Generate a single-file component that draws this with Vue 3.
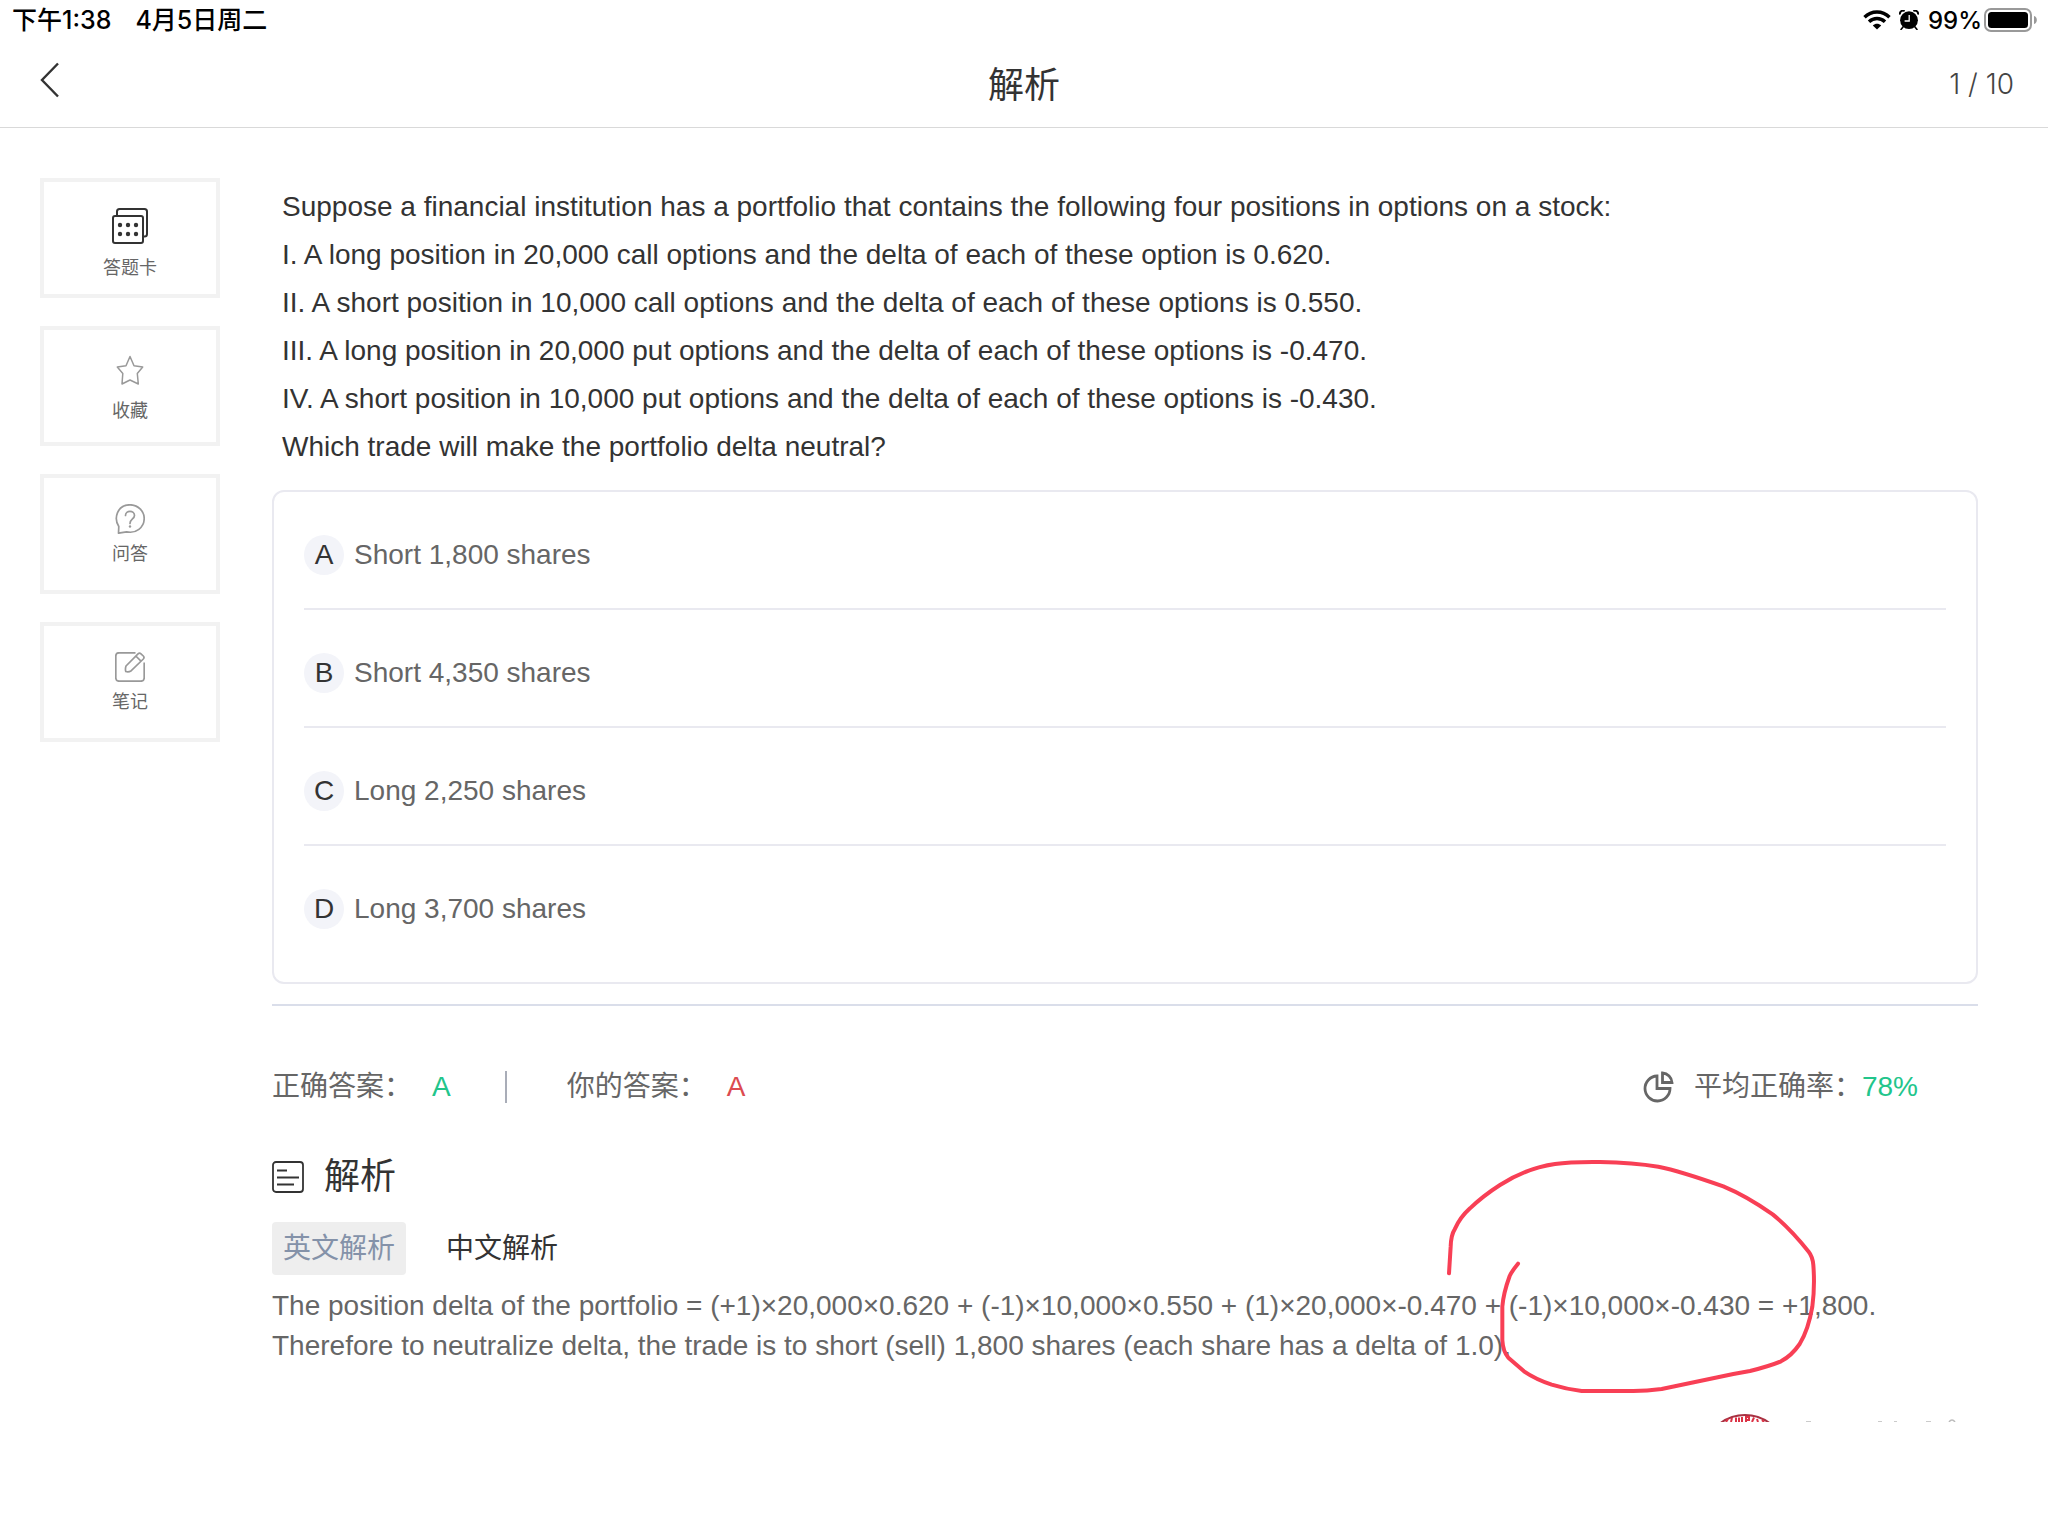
<script setup>
import { ref } from 'vue'

const QUESTION_LINES = [
  'Suppose a financial institution has a portfolio that contains the following four positions in options on a stock:',
  'I. A long position in 20,000 call options and the delta of each of these option is 0.620.',
  'II. A short position in 10,000 call options and the delta of each of these options is 0.550.',
  'III. A long position in 20,000 put options and the delta of each of these options is -0.470.',
  'IV. A short position in 10,000 put options and the delta of each of these options is -0.430.',
  'Which trade will make the portfolio delta neutral?',
]

const OPTIONS = [
  { key: 'A', text: 'Short 1,800 shares' },
  { key: 'B', text: 'Short 4,350 shares' },
  { key: 'C', text: 'Long 2,250 shares' },
  { key: 'D', text: 'Long 3,700 shares' },
]

const EXPLANATION = [
  'The position delta of the portfolio = (+1)×20,000×0.620 + (-1)×10,000×0.550 + (1)×20,000×-0.470 + (-1)×10,000×-0.430 = +1,800.',
  'Therefore to neutralize delta, the trade is to short (sell) 1,800 shares (each share has a delta of 1.0).',
]

const TABS = ['英文解析', '中文解析']
const activeTab = ref(0)
</script>

<template>
  <div class="page">
    <div class="status-bar">
      <div class="status-left">
        <span>下午1:38</span>
        <span>4月5日周二</span>
      </div>
      <div class="status-right">
        <svg class="wifi" viewBox="0 0 28 20" width="28" height="20">
          <g fill="none" stroke="#000" stroke-width="3.4">
            <path d="M1.5 7.2 C8.5 0.2 19.5 0.2 26.5 7.2" />
            <path d="M6 11.8 C10.6 7.4 17.4 7.4 22 11.8" />
          </g>
          <path d="M14 19.6 L9.8 15.4 C12.2 13.2 15.8 13.2 18.2 15.4 Z" fill="#000" />
        </svg>
        <svg class="alarm" viewBox="0 0 20 20" width="20" height="20">
          <circle cx="10" cy="10.2" r="8.9" fill="#000" />
          <path d="M1 4.6 A3.2 3.2 0 0 1 5.6 1 M14.4 1 A3.2 3.2 0 0 1 19 4.6" fill="none" stroke="#000" stroke-width="2" />
          <path d="M4.2 16.8 L2 19.4 M15.8 16.8 L18 19.4" stroke="#000" stroke-width="1.6" stroke-linecap="round" />
          <path d="M10.2 5 V11 H5.6" fill="none" stroke="#fff" stroke-width="1.3" />
        </svg>
        <span class="percent">99%</span>
        <svg class="battery" viewBox="0 0 54 24" width="54" height="24">
          <rect x="1" y="1" width="46" height="22" rx="6" fill="none" stroke="#999" stroke-width="2" />
          <rect x="4" y="4" width="40" height="16" rx="3.5" fill="#000" />
          <path d="M50 8 C53.8 9 53.8 15 50 16 Z" fill="#999" />
        </svg>
      </div>
    </div>

    <header class="nav">
      <button class="back" aria-label="返回">
        <svg viewBox="0 0 20 36" width="20" height="36">
          <path d="M18 1.5 L2 18 L18 34.5" fill="none" stroke="#333" stroke-width="2.4" />
        </svg>
      </button>
      <h1>解析</h1>
      <span class="progress">1 / 10</span>
    </header>

    <main class="body">
      <aside class="tools">
        <button class="tool first">
          <svg viewBox="0 0 36 36" width="36" height="36" fill="none" stroke="#333" stroke-width="2">
            <path d="M5 7.5 V3.5 Q5 1 7.5 1 H32.5 Q35 1 35 3.5 V26 Q35 28.5 32.5 28.5 H31.5" />
            <rect x="1" y="8" width="30" height="27" rx="2" />
            <g fill="#333" stroke="none">
              <circle cx="8" cy="17" r="2.2" /><circle cx="16" cy="17" r="2.2" /><circle cx="24" cy="17" r="2.2" />
              <circle cx="8" cy="26" r="2.2" /><circle cx="16" cy="26" r="2.2" /><circle cx="24" cy="26" r="2.2" />
            </g>
          </svg>
          <span>答题卡</span>
        </button>
        <button class="tool second">
          <svg viewBox="0 0 30 30" width="30" height="30" fill="none" stroke="#999" stroke-width="1.5" stroke-linejoin="round">
            <path d="M15 1.5 L19 10.7 L27.7 12 L22.3 18.5 L23.3 29 L15 25 L7 29 L7.8 18.5 L2.3 12 L11 10.7 Z" />
          </svg>
          <span>收藏</span>
        </button>
        <button class="tool">
          <svg viewBox="0 0 30 30" width="30" height="30" fill="none" stroke="#999" stroke-width="1.7">
            <path d="M3.8 22.5 C-1.5 14.5 2 0.8 15 0.8 C23 0.8 29.2 7 29.2 14.5 C29.2 23.5 21 30 11.5 27.8 L3.5 29.2 Z" stroke-linejoin="round" />
            <path d="M10.5 11.5 C10.5 6 19.5 6 19.5 11.5 C19.5 15 15 15 15 19.5" stroke-linecap="round" />
            <circle cx="15" cy="22.5" r="1.2" fill="#999" stroke="none" />
          </svg>
          <span>问答</span>
        </button>
        <button class="tool">
          <svg viewBox="0 0 30 30" width="30" height="30" fill="none" stroke="#999" stroke-width="1.7">
            <path d="M20.5 0.8 H4 Q0.8 0.8 0.8 4 V26 Q0.8 29.2 4 29.2 H26 Q29.2 29.2 29.2 26 V10.5" />
            <path d="M11 14 L23 1.8 Q24.5 0.5 26 1.8 L28.3 4 Q29.7 5.5 28.3 7 L16.3 18.7 Q13.5 20.5 10.8 19.5 Q10 17 11 14 Z M20.8 4 L26 9.2" />
          </svg>
          <span>笔记</span>
        </button>
      </aside>

      <section class="content">
        <div class="question">
          <p v-for="line in QUESTION_LINES" :key="line">{{ line }}</p>
        </div>

        <div class="options">
          <button v-for="o in OPTIONS" :key="o.key" class="option">
            <span class="letter">{{ o.key }}</span>
            <span>{{ o.text }}</span>
          </button>
        </div>

        <div class="answers">
          <span>正确答案：</span>
          <span class="value right">A</span>
          <i class="bar"></i>
          <span>你的答案：</span>
          <span class="value wrong">A</span>
          <div class="rate">
            <svg viewBox="0 0 32 32" width="32" height="32" fill="none" stroke="#666" stroke-width="2.8">
              <path d="M15 5 A12.5 12.5 0 1 0 28 17.5 H15 Z" />
              <path d="M20.5 2 V11.5 H30 A10 10 0 0 0 20.5 2 Z" />
            </svg>
            <span>平均正确率：</span>
            <span class="right">78%</span>
          </div>
        </div>

        <div class="heading">
          <svg viewBox="0 0 32 32" width="32" height="32" fill="none" stroke="#333" stroke-width="1.8">
            <rect x="1" y="1" width="30" height="30" rx="3" />
            <path d="M5 9.5 H15 M5 16.5 H27 M5 23.5 H22" />
          </svg>
          <h2>解析</h2>
        </div>

        <div class="tabs">
          <button
            v-for="(t, i) in TABS"
            :key="t"
            class="tab"
            :class="{ active: activeTab === i }"
            @click="activeTab = i"
          >{{ t }}</button>
        </div>

        <div class="explanation">
          <p v-for="line in EXPLANATION" :key="line">{{ line }}</p>
          <!-- pen stroke drawn over the text -->
          <svg class="pen" viewBox="0 0 1560 900" width="520" height="300">
            <path
              d="M147 400 L152 320 Q153 285 164 268 Q180 232 210 205 Q250 167 300 135 Q380 84 465 72 Q510 65 600 66 Q700 68 775 80 Q840 93 970 139 Q1040 168 1118 223 Q1170 265 1226 335 Q1238 350 1240 375 Q1245 440 1237 500 Q1225 570 1199 612 Q1175 647 1143 664 Q1110 678 1050 693 L1000 702 L785 747 Q740 753 700 753 H545 Q500 748 455 734 Q405 717 372 694 L325 653 Q309 635 307 600 V500 Q310 460 329 408 Q336 393 354 371"
              fill="none"
              stroke="#f83f55"
              stroke-width="12"
              stroke-linecap="round"
              stroke-linejoin="round"
            />
          </svg>
        </div>

        <!-- top edge of the watermark, cut off by the scroll area -->
        <div class="watermark">
          <svg viewBox="-2 0 280 8" width="280" height="8">
            <circle cx="45" cy="42" r="41" fill="#fff" stroke="#a93243" stroke-width="2" />
            <path d="M26 8 L28 5 M31 8 L32 4 M36 8 V3.5 M39 3.5 V8 M42 3 V8 M46 8 V3 H49 V6 H46 M52 8 L54 3.5 M57 5 L58 8 M62 6 L64 8" fill="none" stroke="#dc3346" stroke-width="2" />
            <path d="M106 8 H111 M178 8 H182 M194 8 H197 M226 8 H231 M249 8 Q252 4 255 8" fill="none" stroke="#bbb" stroke-width="1.5" />
          </svg>
        </div>
      </section>
    </main>
  </div>
</template>

<style>
body {
  background: #fff;
}
</style>

<style scoped>
.page {
  min-height: 100vh;
  background: #fff;
  color: #333;
  font-family: "Liberation Sans", "Noto Sans CJK SC", sans-serif;
  font-size: 28px;
}

h1,
h2,
p {
  margin: 0;
  font-weight: 400;
}

button {
  margin: 0;
  padding: 0;
  border: 0;
  background: none;
  color: inherit;
  font: inherit;
  cursor: pointer;
}

svg {
  display: block;
  flex: none;
}

.status-bar {
  display: flex;
  justify-content: space-between;
  align-items: center;
  height: 40px;
  padding: 0 10px 0 12px;
  color: #000;
  font-family: Inter, "Noto Sans CJK SC", sans-serif;
  font-size: 24px;
  font-weight: 500;
}

.status-left {
  display: flex;
  gap: 24px;
  padding-bottom: 4px;
  font-size: 25px;
}

.status-right {
  display: flex;
  align-items: center;
}

.alarm {
  margin-left: 8px;
}

.percent {
  margin: 0 2px 0 9px;
}

.nav {
  display: grid;
  grid-template-columns: 1fr auto 1fr;
  align-items: center;
  height: 87px;
  padding: 0 34px;
  border-bottom: 1px solid #d9d9d9;
}

.back {
  justify-self: start;
  padding: 0 0 8px 6px;
}

.nav h1 {
  padding-top: 4px;
  font-size: 36px;
  line-height: 48px;
}

.progress {
  justify-self: end;
  color: #444;
  font-family: Inter, sans-serif;
  font-weight: 300;
}

.body {
  display: flex;
  gap: 52px;
  padding: 50px 70px 0 40px;
}

.tools {
  display: flex;
  flex: none;
  flex-direction: column;
  gap: 28px;
  width: 180px;
}

.tool {
  display: flex;
  flex-direction: column;
  align-items: center;
  justify-content: center;
  gap: 6px;
  height: 120px;
  padding-top: 4px;
  border: 4px solid #f2f2f2;
  color: #666;
  font-size: 18px;
  line-height: 28px;
}

.tool.first {
  gap: 10px;
  padding-top: 14px;
}

.tool.second {
  gap: 12px;
  padding-top: 8px;
}

.content {
  flex: 1;
  min-width: 0;
}

.question {
  padding: 5px 10px 19px;
  line-height: 48px;
}

.options {
  padding: 0 30px 18px;
  border: 2px solid #e9e9f0;
  border-radius: 12px;
}

.option {
  display: flex;
  align-items: center;
  gap: 10px;
  box-sizing: border-box;
  width: 100%;
  height: 118px;
  padding-top: 10px;
  border-bottom: 2px solid #e9e9f0;
  color: #666;
}

.option:last-child {
  border-bottom-color: transparent;
}

.letter {
  width: 40px;
  border-radius: 50%;
  background: #f3f4f9;
  color: #333;
  line-height: 40px;
  text-align: center;
}

.answers {
  display: flex;
  align-items: center;
  margin-top: 20px;
  padding: 57px 60px 0 0;
  border-top: 2px solid #dadeea;
  color: #666;
  line-height: 48px;
}

.value {
  margin-left: 20px;
}

.right {
  color: #22c58b;
}

.wrong {
  color: #dc4b50;
}

.bar {
  width: 2px;
  height: 32px;
  margin: 0 60px 0 54px;
  background: #a9adb8;
}

.rate {
  display: flex;
  align-items: center;
  margin-left: auto;
}

.rate svg {
  margin-right: 20px;
}

.heading {
  display: flex;
  align-items: center;
  gap: 20px;
  margin-top: 42px;
}

.heading h2 {
  font-size: 36px;
  line-height: 48px;
}

.tabs {
  display: flex;
  gap: 29px;
  margin-top: 21px;
}

.tab {
  padding: 0 11px;
  border-radius: 4px;
  line-height: 53px;
}

.tab.active {
  background: #eee;
  color: #8492a9;
}

.explanation {
  position: relative;
  margin-top: 11px;
  color: #666;
  line-height: 40px;
}

.pen {
  position: absolute;
  top: -146px;
  left: 1128px;
  pointer-events: none;
}

.watermark {
  display: flex;
  justify-content: flex-end;
  margin-top: 48px;
}
</style>
